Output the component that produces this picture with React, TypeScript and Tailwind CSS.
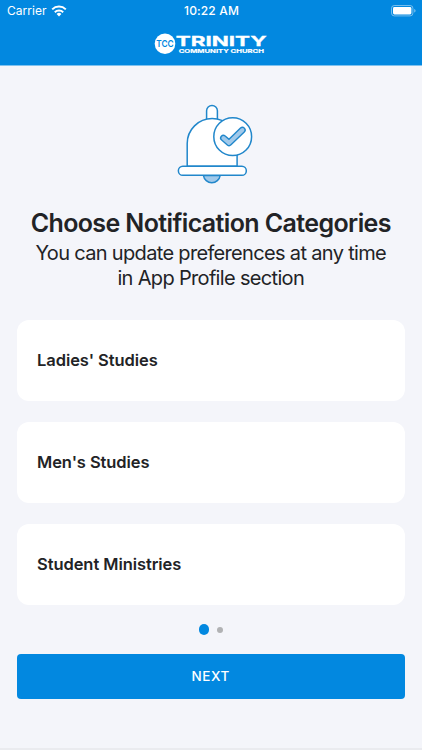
import { clsx } from "clsx";

const categories = ["Ladies' Studies", "Men's Studies", "Student Ministries"];

function WifiIcon() {
    return (
        <svg width="16" height="12" viewBox="0 0 16 12" fill="none" stroke="#fff">
            <path d="M1.2 4.4a9.7 9.7 0 0 1 13.6 0" strokeWidth="2" />
            <path d="M3.8 7.2a6 6 0 0 1 8.4 0" strokeWidth="1.9" />
            <path d="M8 11.5 5.6 9a3.4 3.4 0 0 1 4.8 0Z" fill="#fff" stroke="none" />
        </svg>
    );
}

function BatteryIcon() {
    return (
        <svg width="25" height="12" viewBox="0 0 25 12">
            <rect x="0.5" y="0.5" width="21.4" height="10.4" rx="2.8" fill="none" stroke="#fff" strokeOpacity="0.45" />
            <rect x="2" y="2" width="18.4" height="7.4" rx="1.4" fill="#fff" />
            <path d="M23.3 4v3.6c.8-.3 1.2-1 1.2-1.8s-.4-1.5-1.2-1.8Z" fill="#fff" fillOpacity="0.55" />
        </svg>
    );
}

function StatusBar() {
    return (
        <div className="flex h-[22px] items-center justify-between pl-[7px] pr-[6px] text-[12px] leading-none text-white">
            <div className="flex flex-1 items-center gap-[4px]">
                <span className="tracking-[0.05px]">Carrier</span>
                <WifiIcon />
            </div>
            <span className="font-medium tracking-[0.15px]">10:22 AM</span>
            <div className="flex flex-1 justify-end">
                <BatteryIcon />
            </div>
        </div>
    );
}

function Logo() {
    return (
        <svg width="114" height="24" viewBox="0 0 114 24" fill="#fff" fontFamily="Inter, sans-serif">
            <circle cx="11" cy="11.8" r="10.3" />
            <text x="2.3" y="15.2" fontSize="9.6" fontWeight="600" fill="#0288e0" textLength="17.4" lengthAdjust="spacingAndGlyphs">TCC</text>
            <text x="21.7" y="13.8" fontSize="13.8" fontWeight="700" stroke="#fff" strokeWidth="0.3" textLength="91" lengthAdjust="spacingAndGlyphs">TRINITY</text>
            <text x="24.7" y="20.6" fontSize="5.3" fontWeight="700" stroke="#fff" strokeWidth="0.15" textLength="85.3" lengthAdjust="spacingAndGlyphs">COMMUNITY CHURCH</text>
        </svg>
    );
}

function BellIcon() {
    return (
        <svg width="100" height="100" viewBox="0 0 100 100" fill="#fff" stroke="#2187cb" strokeWidth="1.5" strokeLinecap="round" strokeLinejoin="round">
            <path d="M41.6 25V15.8a5.4 5.4 0 0 1 10.8 0V25" />
            <path d="M38.4 80.5a8.5 8.5 0 0 0 16.8 0Z" fill="#a1c9ea" />
            <path d="M22.2 71.2V48.5a24.9 24.9 0 0 1 49.9 0V71.2Z" />
            <rect x="13.4" y="71.2" width="67.9" height="9.1" rx="4.4" />
            <circle cx="67.7" cy="41.7" r="18.9" />
            <path d="M58.4 43 64.1 47.9 77.4 35" fill="none" strokeWidth="6.8" />
            <path d="M58.4 43 64.1 47.9 77.4 35" fill="none" stroke="#a1c9ea" strokeWidth="4" />
        </svg>
    );
}

function CategoryCard({ title }: { title: string }) {
    return (
        <div className="flex h-[81px] items-center rounded-[12px] bg-white px-[20.5px] text-[16.5px] font-semibold tracking-[-0.07px] text-[#222326]">
            {title}
        </div>
    );
}

function PageDots({ count, active }: { count: number; active: number }) {
    return (
        <div className="flex h-[11px] items-center justify-center gap-2">
            {Array.from({ length: count }, (_, i) => (
                <span
                    key={i}
                    className={clsx(
                        "rounded-full",
                        i === active ? "size-[10.5px] bg-[#0288e0]" : "size-[6px] bg-[#b1b2b4]"
                    )}
                />
            ))}
        </div>
    );
}

export default function App() {
    return (
        <div className="flex h-[750px] w-[422px] flex-col overflow-hidden bg-[#f4f5fa] font-['Inter','Liberation_Sans',sans-serif] text-[#222326]">
            <header className="h-[66px] border-b border-[#7fc2ef] bg-[#0288e0]">
                <StatusBar />
                <div className="flex justify-center pt-[10px]">
                    <Logo />
                </div>
            </header>

            <main className="flex flex-1 flex-col pl-[16.5px] pr-[17px] pt-[29px]">
                <div className="flex justify-center pl-[8px]">
                    <BellIcon />
                </div>
                <h1 className="mt-[12px] whitespace-nowrap text-center text-[25px] font-semibold leading-[32px] tracking-[-0.61px]">
                    Choose Notification Categories
                </h1>
                <p className="mt-[2px] whitespace-nowrap text-center text-[20px] leading-[24.5px] tracking-[-0.67px]">
                    You can update preferences at any time
                    <br />
                    in App Profile section
                </p>

                <div className="mt-[30px] flex flex-col gap-[21px]">
                    {categories.map((title) => (
                        <CategoryCard key={title} title={title} />
                    ))}
                </div>

                <div className="mt-[19px]">
                    <PageDots count={2} active={0} />
                </div>
                <button className="mt-[19px] h-[45px] rounded-[4px] bg-[#0288e0] text-[13.5px] font-medium tracking-[0.6px] text-white">
                    NEXT
                </button>
            </main>

            {/* Top edge of the bottom bar */}
            <div className="h-[2px] bg-[#eaebef]" />
        </div>
    );
}
